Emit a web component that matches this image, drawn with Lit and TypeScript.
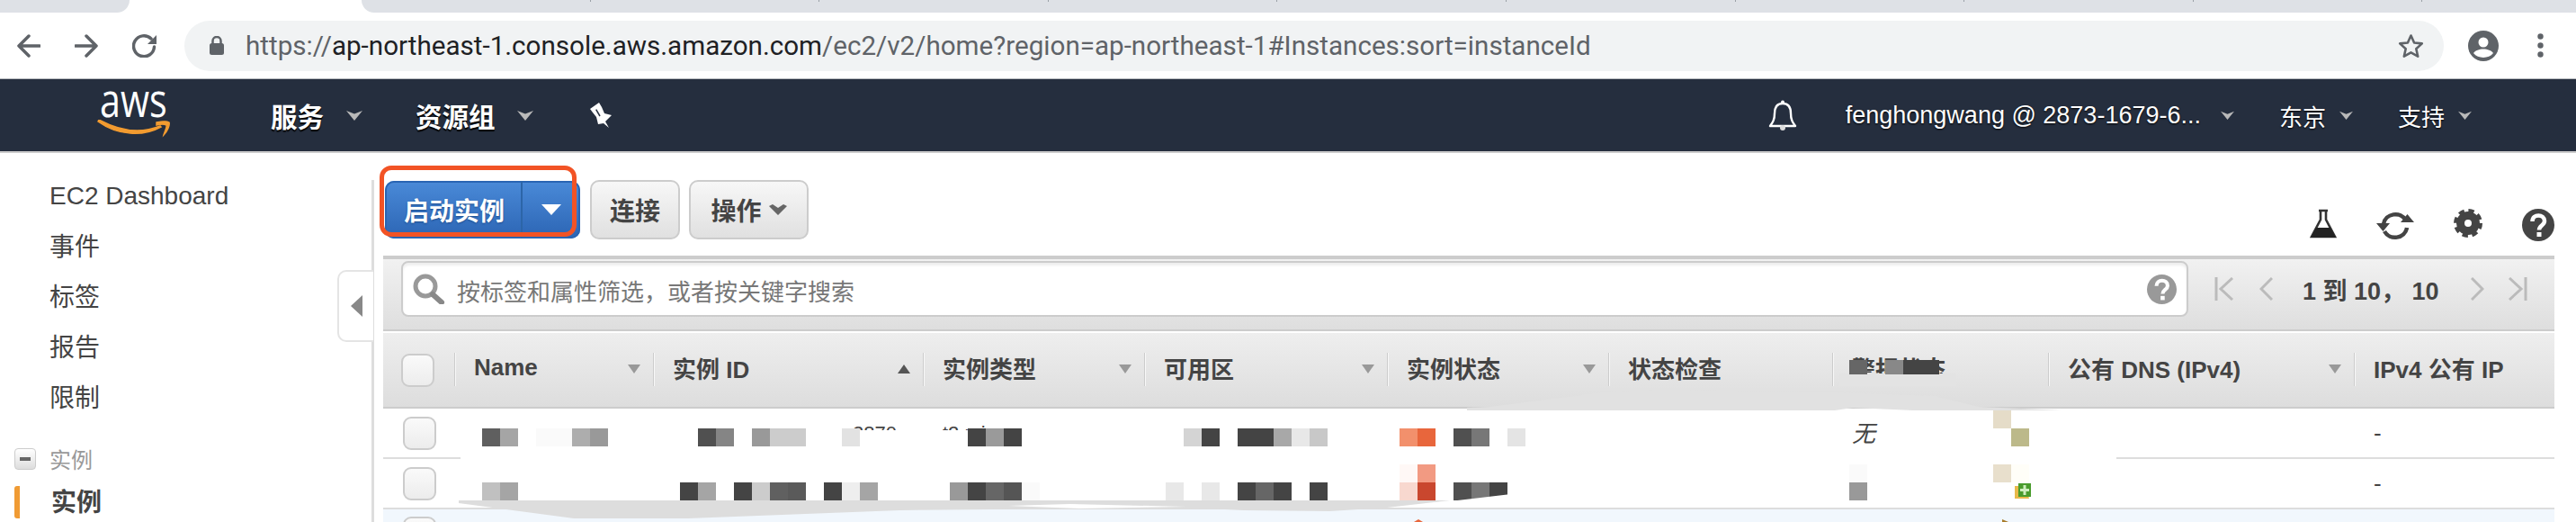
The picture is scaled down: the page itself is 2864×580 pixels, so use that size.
import { LitElement, html, css, svg } from "lit";
import { customElement } from "lit/decorators.js";

type R = [number, number, number, number, string];
const B = 20;
const row = (y: number, list: [number, string][]): R[] => list.map(([x, c]) => [x, y, B, B, c] as R);
const blocks: R[] = [
  [512, 508, 1841, 2, "#fff"],
  ...row(476, [[536,"#5f5f5f"],[556,"#a5a5a5"],[596,"#fafafa"],[616,"#fafafa"],[636,"#adadad"],[656,"#999"],[776,"#505050"],[796,"#858585"],[836,"#999"],[856,"#ccc"],[876,"#ccc"],[936,"#e2e2e2"],[1076,"#444"],[1096,"#9a9a9a"],[1116,"#444"],[1316,"#d4d4d4"],[1336,"#444"],[1376,"#444"],[1396,"#444"],[1416,"#a8a8a8"],[1436,"#e8e8e8"],[1456,"#c8c8c8"],[1556,"#f2906c"],[1576,"#e8663c"],[1616,"#505050"],[1636,"#777"],[1676,"#e4e4e4"],[2236,"#bcb98a"]]),
  ...row(536, [[536,"#c0c0c0"],[556,"#a5a5a5"],[756,"#444"],[776,"#a5a5a5"],[816,"#444"],[836,"#ccc"],[856,"#606060"],[876,"#5a5a5a"],[916,"#444"],[936,"#eee"],[956,"#a5a5a5"],[1056,"#999"],[1076,"#444"],[1096,"#666"],[1116,"#555"],[1136,"#fafafa"],[1296,"#e8e8e8"],[1336,"#e8e8e8"],[1376,"#444"],[1396,"#666"],[1416,"#444"],[1456,"#444"],[1556,"#f8d8cf"],[1576,"#c9472e"],[1616,"#505050"],[1636,"#777"],[1656,"#444"],[2056,"#999"]]),
  ...row(516, [[1556,"#fff8f6"],[1576,"#f29a82"],[2056,"#fafafa"],[2216,"#e8dfcc"],[2236,"#fffef8"]]),
  ...row(456, [[2216,"#e5dcc8"]]),
  [2045, 415, 130, 14, "#e3e3e3"],
  [2056, 400, 20, 16, "#666"],
  [2096, 400, 20, 16, "#888"],
  [2116, 400, 40, 16, "#444"],
];

const caret = (cls = "caret") => html`<svg class=${cls} viewBox="0 0 18 12"><path d="M0 1 L9 4.5 L18 1 L9 12z"/></svg>`;
const sort = (up = false) => html`<svg class=${up ? "sort up" : "sort"} viewBox="0 0 14 10"><path d=${up ? "M0 10H14L7 0z" : "M0 0H14L7 10z"}/></svg>`;
const cols = [
  { w: 221, t: "Name", s: sort() },
  { w: 300, t: "实例 ID", s: sort(true) },
  { w: 246, t: "实例类型", s: sort() },
  { w: 270, t: "可用区", s: sort() },
  { w: 246, t: "实例状态", s: sort() },
  { w: 249, t: "状态检查", s: null },
  { w: 240, t: "警报状态", s: null },
  { w: 340, t: "公有 DNS (IPv4)", s: sort() },
  { w: 223, t: "IPv4 公有 IP", s: null },
];

@customElement("app-root")
export class AppRoot extends LitElement {
  static styles = css`
    :host { display: block; position: relative; width: 2864px; height: 580px; overflow: hidden; background: #fff;
      font-family: "Liberation Sans", "Noto Sans CJK SC", sans-serif; color: #444; }
    svg { display: block; flex: none; }
    .tabs { display: flex; height: 14px; background: #fff; }
    .tab-l { width: 144px; background: #dee1e6; border-bottom-right-radius: 14px; }
    .tab-on { width: 258px; }
    .tab-r { flex: 1; display: flex; background: #dee1e6; border-bottom-left-radius: 14px; }
    .tick { width: 254.6px; height: 2px; border-right: 1px solid #9aa0a6; box-sizing: border-box; flex: none; }
    .chrome { display: flex; align-items: center; height: 73px; padding-left: 19px; border-bottom: 1px solid #b8bbbe; }
    .chrome .ic { stroke: #5f6368; fill: none; stroke-width: 3.5; stroke-linecap: round; stroke-linejoin: round; }
    .fwd { margin-left: 38px; }
    .rel { margin-left: 38px; }
    .addr { margin-left: 30px; width: 2512px; height: 56px; border-radius: 28px; background: #f1f3f4; display: flex; align-items: center; padding-left: 28px; box-sizing: border-box; flex: none; }
    .url { margin-left: 24px; font: 400 29.6px Roboto, sans-serif; color: #5f6368; white-space: nowrap; }
    .url b { font-weight: 400; color: #202124; }
    .star { margin-left: auto; margin-right: 22px; }
    .avatar { margin-left: 27px; }
    .dots { margin-left: 43px; }
    .nav { display: flex; align-items: center; height: 80px; background: #252e3e; border-bottom: 2px solid #ccc; padding: 0 116px 0 111px; color: #fff; }
    .logo { width: 79px; flex: none; align-self: flex-start; }
    .aws { display: block; font: 400 51px/46px "Open Sans", sans-serif; transform: scaleX(.81); transform-origin: 0 0; color: #fff; margin-top: -1px; height: 46px; }
    .smile { margin-left: -3px; }
    .nitem { font-size: 29.5px; font-weight: 700; text-shadow: 0 2px 1px #000; display: flex; align-items: center; }
    .caret { width: 18px; height: 12px; fill: #b9b9b9; }
    .n1 { margin-left: 111px; gap: 25px; }
    .n2 { margin-left: 59px; gap: 24px; }
    .pin { margin-left: 63px; }
    .right { margin-left: auto; display: flex; align-items: center; font-size: 26px; text-shadow: 0 1px 2px #000; }
    .right .caret { width: 15px; height: 10px; }
    .acct { margin-left: 54px; display: flex; align-items: center; gap: 22px; white-space: nowrap; font-size: 27px; }
    .r2 { margin-left: 50px; display: flex; align-items: center; gap: 15px; }
    .body { display: flex; height: 410px; }
    .side { width: 413px; flex: none; padding-top: 20px; box-sizing: border-box; font-size: 28px; color: #444; }
    .si { height: 56px; line-height: 56px; padding-left: 55px; }
    .si.zh { line-height: 58px; }
    .grp { display: flex; align-items: center; gap: 15px; height: 36px; margin-top: 22px; padding-left: 16px; font-size: 24px; color: #999; }
    .box { width: 24px; height: 24px; box-sizing: border-box; border: 1px solid #ccc; border-radius: 4px; background: linear-gradient(#fff, #ddd); display: flex; align-items: center; justify-content: center; }
    .box i { width: 12px; height: 4px; background: #666; display: block; }
    .grp span { margin-top: -2px; }
    .act { height: 36px; line-height: 38px; margin: 12px 0 0 16px; border-left: 6px solid #f09b34; border-radius: 3px; padding-left: 35px; font-weight: 700; color: #444; }
    .rule { position: relative; width: 3px; margin-top: 30px; background: #ddd; flex: none; }
    .handle { position: absolute; left: -38px; top: 100px; width: 40px; height: 80px; box-sizing: border-box; background: #fff; border: 2px solid #e4e4e4; border-right: 0; border-radius: 10px 0 0 10px; display: flex; align-items: center; justify-content: center; }
    .main { width: 2414px; margin-left: 10px; flex: none; }
    .bar { height: 114px; display: flex; box-sizing: border-box; padding-top: 30px; }
    .btn { height: 66px; box-sizing: border-box; border: 2px solid #ccc; border-radius: 10px; background: linear-gradient(#f7f7f7, #e0e0e0); font-size: 28px; font-weight: 700; color: #444; display: flex; align-items: center; justify-content: center; flex: none; }
    .launch { position: relative; margin: 1px 0 0 2px; width: 217px; height: 64px; border: 0; border-radius: 10px; background: linear-gradient(#4a8ad8, #2c65b4); box-shadow: inset 0 0 0 2px #2a65b3; color: #fff; text-shadow: 0 1px 2px #1d4c8c; justify-content: flex-start; }
    .launch span { width: 153px; height: 100%; display: flex; align-items: center; padding-left: 21px; box-sizing: border-box; border-right: 2px solid #2c65a8; }
    .launch svg { margin-left: 21px; }
    .mark { position: absolute; left: -6px; top: -17px; width: 219px; height: 79px; box-sizing: border-box; border: 5px solid #f25325; border-radius: 13px; }
    .b2 { margin-left: 11px; width: 100px; }
    .b3 { margin-left: 10px; width: 133px; gap: 8px; }
    .tools { margin-left: auto; margin-top: 32px; display: flex; gap: 44px; align-items: flex-start; height: 36px; }
    .rf { margin-top: 2px; }
    .panel { border-top: 4px solid #ccc; }
    .search { height: 78px; display: flex; align-items: center; border-bottom: 2px solid #ccc; background: linear-gradient(#f1f1f1, #dedede); padding-left: 20px; margin-bottom: 2px; }
    .input { width: 1987px; height: 62px; margin-top: -12px; box-sizing: border-box; border: 2px solid #ccc; border-radius: 8px; background: #fff; display: flex; align-items: center; padding: 0 11px; flex: none; font-size: 26px; color: #777; box-shadow: inset 0 3px 3px #eee; }
    .input span { margin-left: 13px; flex: 1; padding-top: 2px; }
    .pager { display: flex; align-items: center; margin-left: 29px; margin-top: -12px; }
    .pager .ic { fill: none; stroke: #bbb; stroke-width: 3; }
    .pg2 { margin-left: 29px; }
    .pg4 { margin-left: 27px; }
    .ptext { margin: 0 35px 0 33px; font-size: 27px; font-weight: 700; color: #444; white-space: nowrap; }
    .thead { display: flex; height: 82px; background: linear-gradient(#eee, #ddd); border-bottom: 2px solid #ccc; }
    .c0 { width: 79px; flex: none; display: flex; align-items: center; padding-left: 20px; box-sizing: border-box; }
    .chk { width: 37px; height: 37px; box-sizing: border-box; border: 2px solid #ccc; border-radius: 9px; background: linear-gradient(#fafafa, #ececec); flex: none; }
    .th { position: relative; flex: none; display: flex; align-items: center; justify-content: space-between; padding: 0 14px 0 22px; box-sizing: border-box; font-size: 26px; font-weight: 700; color: #444; white-space: nowrap; }
    .th span { margin-top: -5px; }
    .th::before { content: ""; position: absolute; left: 0; top: 22px; height: 37px; width: 2px; background: #f8f8f8; border-left: 1px solid #ccc; box-sizing: border-box; }
    .sort { width: 14px; height: 10px; fill: #999; margin-top: -3px; }
    .sort.up { fill: #555; }
    .tr { display: flex; height: 54px; border-bottom: 2px solid #ddd; background: #fff; font-size: 26px; color: #444; }
    .tr .c0 { padding-left: 22px; }
    .td { flex: none; padding-left: 22px; box-sizing: border-box; display: flex; align-items: center; white-space: nowrap; }
    .sel { background: #f1f7fd; border-bottom: 0; height: 20px; align-items: flex-start; padding-top: 8px; box-sizing: border-box; }
    .frag { height: 8px; overflow: hidden; font-size: 22px; line-height: 24px; align-self: flex-start; margin-top: 16px; }
    .frag.id { margin-left: 200px; }
    .em { font-style: italic; margin-top: -4px; }
    .over { position: absolute; left: 0; top: 0; pointer-events: none; }
  `;

  private helpIcon(fill: string, size: number) {
    return html`<svg width=${size} height=${size} viewBox="0 0 36 36"><circle cx="18" cy="18" r="18" fill=${fill}/><path d="M11.5 14c0-9 13.500-8.500 13.500-.5 0 5-6 5-6 10" fill="none" stroke="#fff" stroke-width="4.500"/><rect x="16.500" y="26" width="5" height="5" fill="#fff"/></svg>`;
  }

  private cell(j: number, i: number) {
    if (j === 6 && i === 0) return html`<span class="em">无</span>`;
    if (j === 8) return "-";
    if (j === 2 && i === 0) return html`<span class="frag">t2.mi</span>`;
    if (j === 1 && i === 0) return html`<span class="frag id">2870</span>`;
    return "";
  }

  render() {
    return html`
      <div class="tabs"><div class="tab-l"></div><div class="tab-on"></div>
        <div class="tab-r">${Array.from({ length: 9 }, () => html`<div class="tick"></div>`)}</div></div>
      <div class="chrome">
        <svg class="ic" width="26" height="26" viewBox="0 0 26 26"><path d="M25 13H2M13 2 2 13l11 11"/></svg>
        <svg class="ic fwd" width="26" height="26" viewBox="0 0 26 26"><path d="M1 13h23M13 2l11 11-11 11"/></svg>
        <svg class="ic rel" width="28" height="26" viewBox="0 0 28 26"><path d="M21 5A11.500 11.500 0 1 0 24.500 14"/><path d="M27 1v10H17z" fill="#5f6368" stroke="none"/></svg>
        <div class="addr">
          <svg width="16" height="21" viewBox="0 0 16 21"><rect y="8" width="16" height="13" rx="2.500" fill="#5f6368"/><path d="M3.500 9V5.500a4.500 4.500 0 0 1 9 0V9" fill="none" stroke="#5f6368" stroke-width="2.500"/></svg>
          <div class="url">https://<b>ap-northeast-1.console.aws.amazon.com</b>/ec2/v2/home?region=ap-northeast-1#Instances:sort=instanceId</div>
          <svg class="star" width="29" height="28" viewBox="0 0 29 28"><path d="M14.500 2.500l3.600 8 8.700.9-6.500 5.800 1.900 8.500-7.700-4.400-7.700 4.400 1.900-8.500-6.500-5.800 8.700-.9z" fill="none" stroke="#5f6368" stroke-width="2.600" stroke-linejoin="round"/></svg>
        </div>
        <svg class="avatar" width="34" height="34" viewBox="0 0 34 34"><circle cx="17" cy="17" r="17" fill="#5f6368"/><circle cx="17" cy="13" r="5.500" fill="#fff"/><path d="M6 25c4-6 18-6 22 0-5 6.500-17 6.500-22 0z" fill="#fff"/></svg>
        <svg class="dots" width="7" height="27" viewBox="0 0 7 27"><circle cx="3.500" cy="3.500" r="3.200" fill="#5f6368"/><circle cx="3.500" cy="13.500" r="3.200" fill="#5f6368"/><circle cx="3.500" cy="23.500" r="3.200" fill="#5f6368"/></svg>
      </div>
      <div class="nav">
        <div class="logo"><span class="aws">aws</span>
          <svg class="smile" width="82" height="20" viewBox="0 0 82 20"><path d="M1 2c22 16 50 17 70 6l-1-1C48 16 24 12 2 0z M66 3c5-1 11-2 14 0 1 3-2 10-6 14 1-4 4-9 3-11-2-1-7-1-11 0z" fill="#f29b30" stroke="#f29b30" stroke-width="1.500"/></svg>
        </div>
        <div class="nitem n1">服务 ${caret()}</div>
        <div class="nitem n2">资源组 ${caret()}</div>
        <svg class="pin" width="26" height="29" viewBox="0 0 26 29"><path d="M0 7 10 0l3 5 3 7 8 2-7 7 4 7-6-5-6 1-2-8-4-5z" fill="#fff"/><path d="M6.700 7.700 11 15" stroke="#252e3e" stroke-width="1.500"/></svg>
        <div class="right">
          <svg width="32" height="34" viewBox="0 0 32 34"><circle cx="16" cy="2.500" r="2" fill="#fff"/><path d="M16 4C9 4 7 9 7 15c0 7-2 10-5 14h28c-3-4-5-7-5-14 0-6-2-11-9-11z" fill="none" stroke="#fff" stroke-width="2.400" stroke-linejoin="round"/><circle cx="16" cy="31" r="3" fill="#ddd"/></svg>
          <div class="acct">fenghongwang @ 2873-1679-6... ${caret()}</div>
          <div class="r2">东京 ${caret()}</div>
          <div class="r2">支持 ${caret()}</div>
        </div>
      </div>
      <div class="body">
        <div class="side">
          <div class="si">EC2 Dashboard</div><div class="si zh">事件</div><div class="si zh">标签</div><div class="si zh">报告</div><div class="si zh">限制</div>
          <div class="grp"><div class="box"><i></i></div><span>实例</span></div>
          <div class="act">实例</div>
        </div>
        <div class="rule"><div class="handle"><svg width="13" height="24" viewBox="0 0 13 24"><path d="M13 0v24L0 12z" fill="#888"/></svg></div></div>
        <div class="main">
          <div class="bar">
            <div class="btn launch"><span>启动实例</span><svg width="22" height="12" viewBox="0 0 22 12"><path d="M0 0h22L11 12z" fill="#fff"/></svg><div class="mark"></div></div>
            <div class="btn b2">连接</div>
            <div class="btn b3">操作 <svg width="20" height="12" viewBox="0 0 20 12"><path d="M0 2 4 0l6 4 6-4 4 2-10 10z" fill="#666"/></svg></div>
            <div class="tools">
              <svg width="30" height="34" viewBox="0 0 30 34"><path d="M10 2h10M12 2v10L2 31h26L18 12V2" fill="none" stroke="#333" stroke-width="2.600"/><path d="M7 21h16l6 11H1z" fill="#222"/></svg>
              <svg class="rf" width="42" height="34" viewBox="0 0 42 34"><path d="M8 15C10 3 27 0 33 11M34 19C32 31 15 34 9 23" fill="none" stroke="#444" stroke-width="4.500"/><path d="M0 14h15l-7.500 9zM27 13h15l-7.500-9z" fill="#444"/></svg>
              <svg width="32" height="32" viewBox="0 0 32 32"><circle cx="16" cy="16" r="8.500" fill="none" stroke="#444" stroke-width="9"/><circle cx="16" cy="16" r="13.500" fill="none" stroke="#444" stroke-width="5" stroke-dasharray="6.100 4.500"/></svg>
              ${this.helpIcon("#444", 36)}
            </div>
          </div>
          <div class="panel">
            <div class="search">
              <div class="input">
                <svg width="36" height="34" viewBox="0 0 36 34"><circle cx="14" cy="14" r="11" fill="none" stroke="#999" stroke-width="5"/><path d="M22 23l10 9" stroke="#888" stroke-width="6" stroke-linecap="round"/></svg>
                <span>按标签和属性筛选，或者按关键字搜索</span>
                ${this.helpIcon("#999", 33)}
              </div>
              <div class="pager">
                <svg class="ic" width="21" height="26" viewBox="0 0 21 26"><path d="M2 0v26M20 1 7 13l13 12"/></svg>
                <svg class="ic pg2" width="15" height="26" viewBox="0 0 15 26"><path d="M14 1 2 13l12 12"/></svg>
                <div class="ptext">1 到 10， 10</div>
                <svg class="ic" width="15" height="26" viewBox="0 0 15 26"><path d="M1 1l12 12L1 25"/></svg>
                <svg class="ic pg4" width="21" height="26" viewBox="0 0 21 26"><path d="M19 0v26M1 1l13 12L1 25"/></svg>
              </div>
            </div>
            <div class="thead">
              <div class="c0"><div class="chk"></div></div>
              ${cols.map((c) => html`<div class="th" style="width:${c.w}px"><span>${c.t}</span>${c.s}</div>`)}
            </div>
            ${[0, 1].map((i) => html`<div class="tr">
              <div class="c0"><div class="chk"></div></div>
              ${cols.map((c, j) => html`<div class="td" style="width:${c.w}px">${this.cell(j, i)}</div>`)}
            </div>`)}
            <div class="tr sel"><div class="c0"><div class="chk"></div></div></div>
          </div>
        </div>
      </div>
      <svg class="over" width="2864" height="580" viewBox="0 0 2864 580">
        ${blocks.map((b) => svg`<rect x=${b[0]} y=${b[1]} width=${b[2]} height=${b[3]} fill=${b[4]}/>`)}
        <polygon points="510,556 1612,556 1542,564 1478,568 1383,567 1319,564 1000,567 765,576 638,576 510,559" fill="#ddd"/>
        <polygon points="1121,562 1190,560 1319,563 1200,565" fill="#fff"/>
        <polygon points="1612,557 1680,549 1680,560 1612,560" fill="#fff"/>
        <polygon points="1631,453 1657,452 1790,435 1850,433 2040,436 2150,440 2200,452 2292,456 2127,456 2060,453 2040,456 1631,456" fill="#e1e1e1"/>
        <path d="M2240 540h12l4 14h-16z" fill="#e8b94a"/><rect x="2244" y="537" width="14" height="15" fill="#4a9c2d"/><path d="M2251 539v11M2246 544.500h10" stroke="#cfeec0" stroke-width="3"/>
        <path d="M1572 580l5-3 5 3z" fill="#e8663c"/><path d="M2226 577l7 3h-7z" fill="#a87b2a"/>
      </svg>
    `;
  }
}
